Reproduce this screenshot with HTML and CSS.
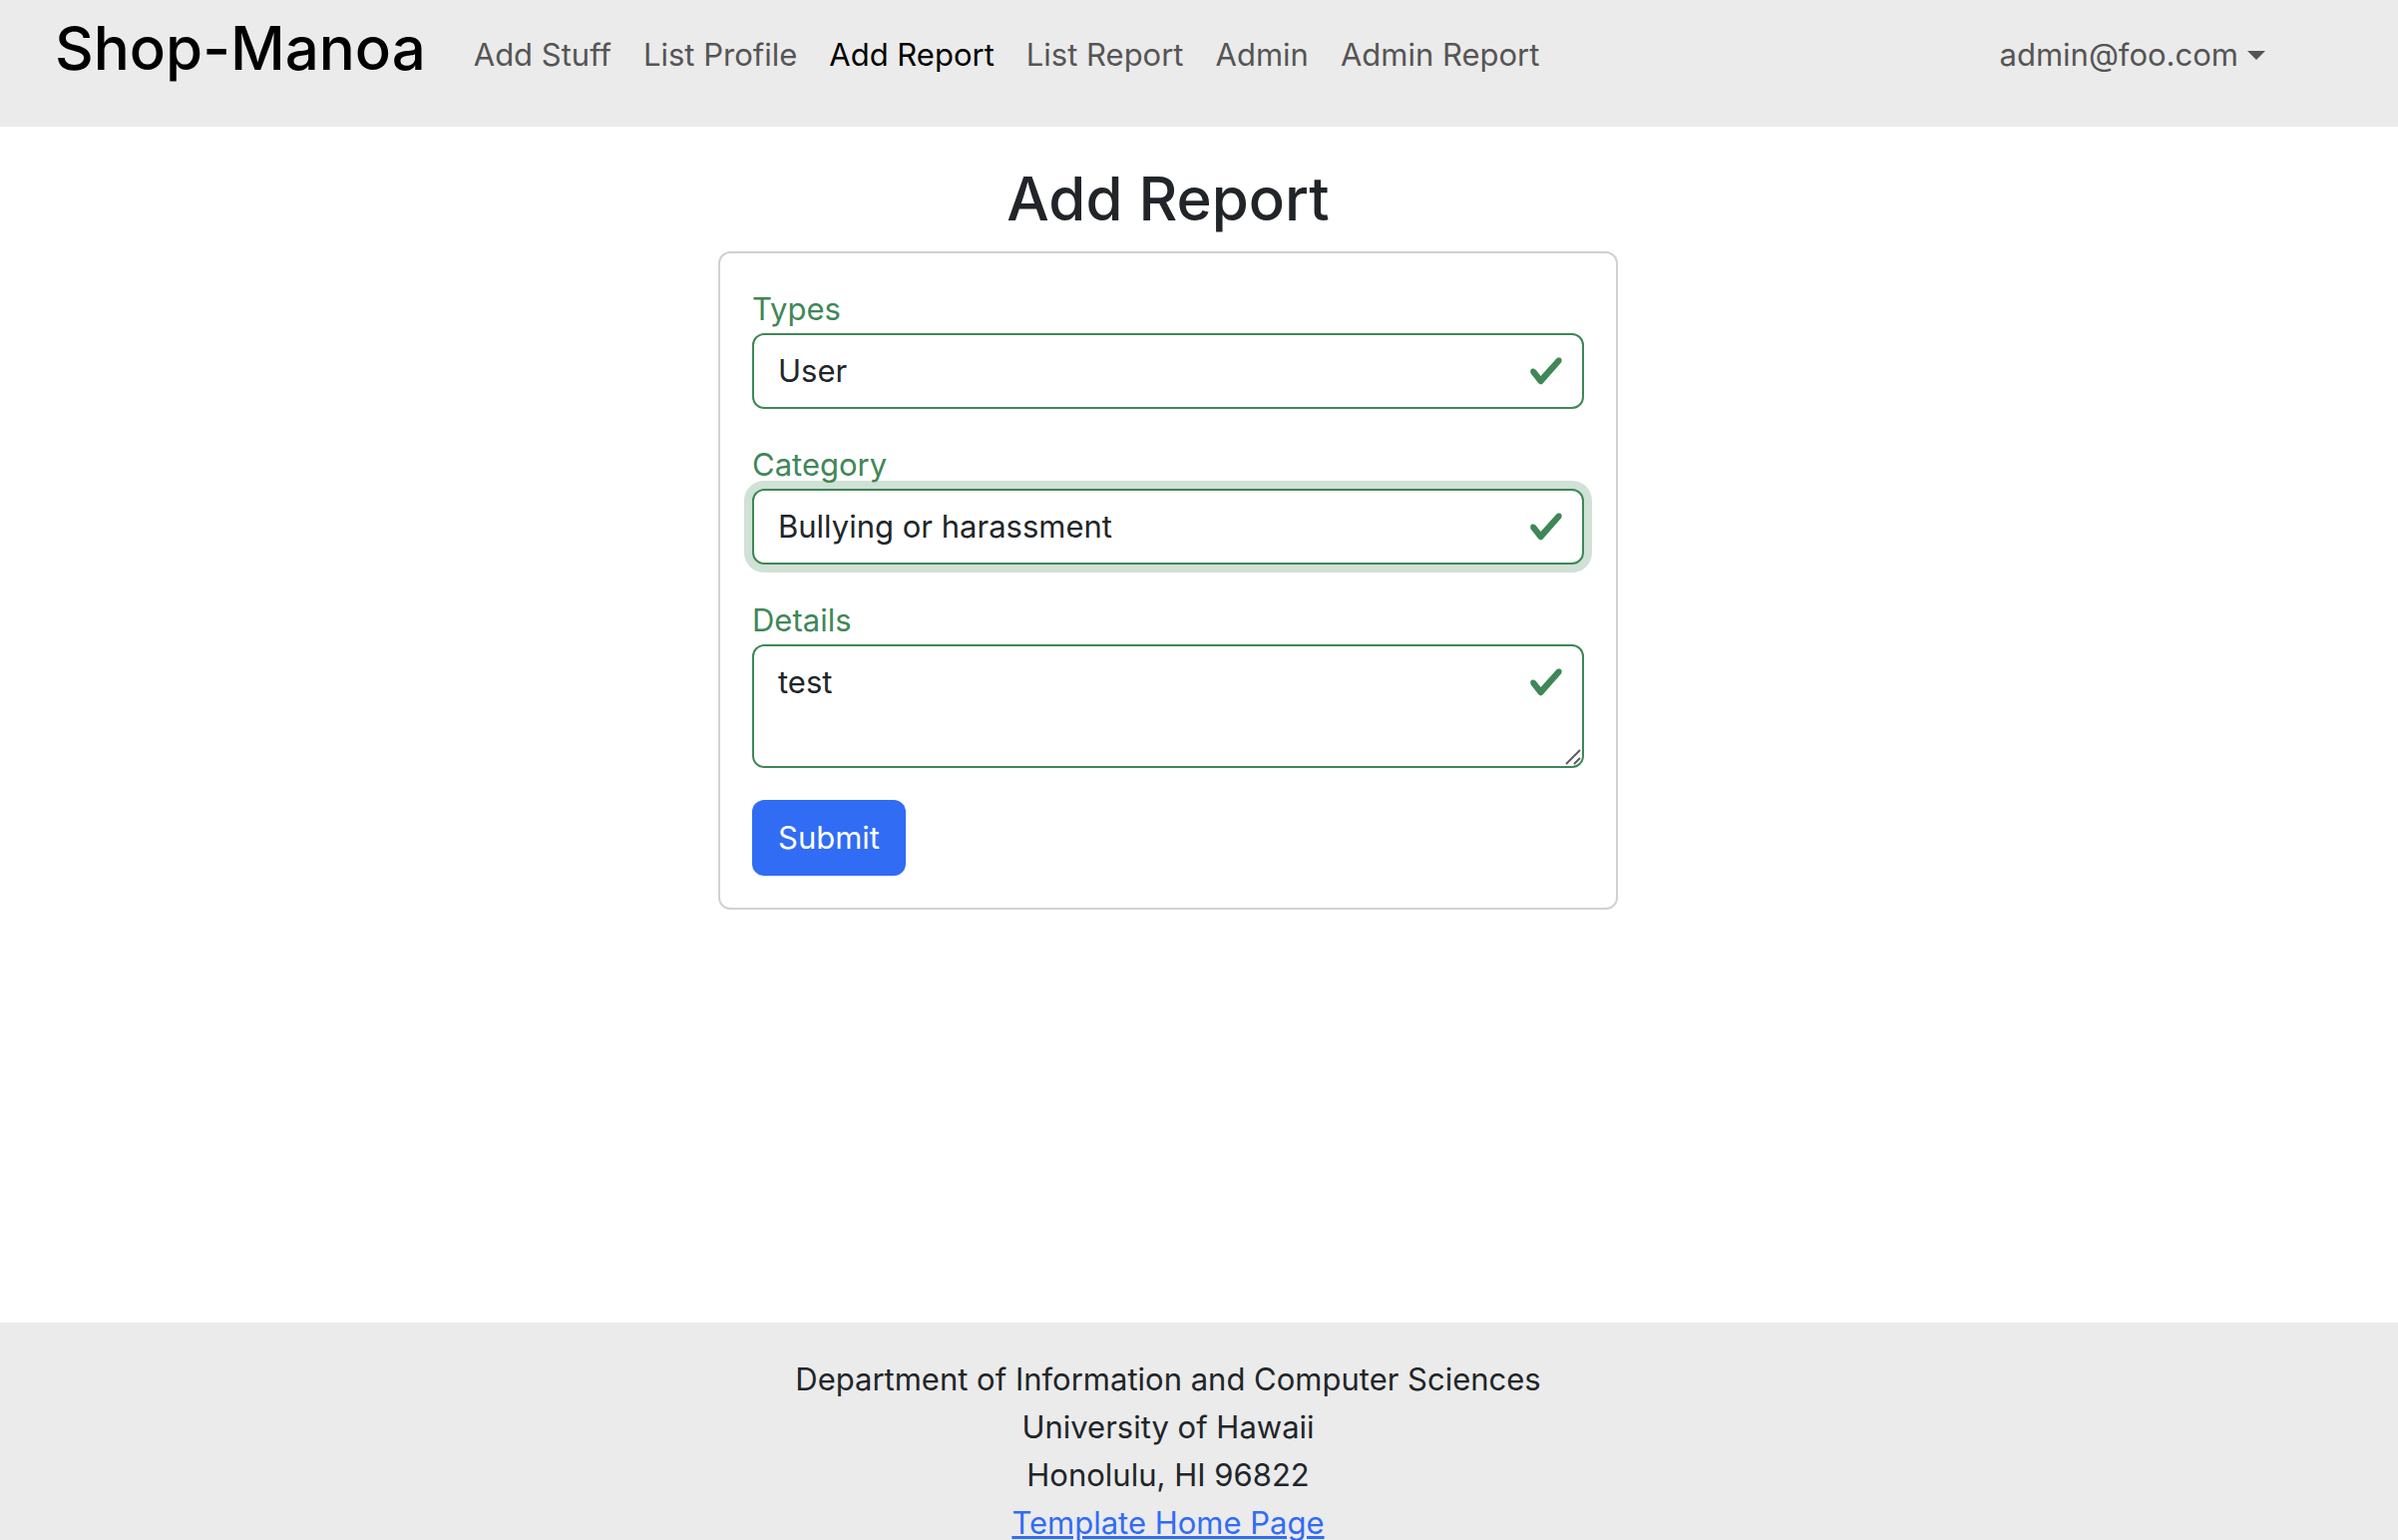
FILE: index.html
```html
<!DOCTYPE html>
<html lang="en">
<head>
<meta charset="utf-8">
<title>Shop-Manoa</title>
<link rel="stylesheet" href="styles.css">
</head>
<body>
<header class="header">
  <nav class="container navbar">
    <a class="brand" href="#">Shop-Manoa</a>
    <div class="nav-links">
      <a class="nav-link" href="#">Add Stuff</a>
      <a class="nav-link" href="#">List Profile</a>
      <a class="nav-link active" href="#">Add Report</a>
      <a class="nav-link" href="#">List Report</a>
      <a class="nav-link" href="#">Admin</a>
      <a class="nav-link" href="#">Admin Report</a>
    </div>
    <button class="nav-link user-menu" type="button">admin@foo.com<span class="caret"></span></button>
  </nav>
</header>
<main class="main">
  <div class="container report">
    <h2 class="title">Add Report</h2>
    <form class="card">
      <div class="field">
        <label class="label" for="types">Types</label>
        <select class="control" id="types"><option>User</option></select>
        <svg class="check" viewBox="0 0 8 8" aria-hidden="true"><path d="M2.3 6.73.6 4.53c-.4-1.04.46-1.4 1.1-.8l1.1 1.4 3.4-3.8c.6-.63 1.6-.27 1.2.7l-4 4.6c-.43.5-.8.4-1.1.1z"/></svg>
      </div>
      <div class="field">
        <label class="label" for="category">Category</label>
        <select class="control focused" id="category"><option>Bullying or harassment</option></select>
        <svg class="check" viewBox="0 0 8 8" aria-hidden="true"><path d="M2.3 6.73.6 4.53c-.4-1.04.46-1.4 1.1-.8l1.1 1.4 3.4-3.8c.6-.63 1.6-.27 1.2.7l-4 4.6c-.43.5-.8.4-1.1.1z"/></svg>
      </div>
      <div class="field">
        <label class="label" for="details">Details</label>
        <textarea class="control details" id="details">test</textarea>
        <svg class="check" viewBox="0 0 8 8" aria-hidden="true"><path d="M2.3 6.73.6 4.53c-.4-1.04.46-1.4 1.1-.8l1.1 1.4 3.4-3.8c.6-.63 1.6-.27 1.2.7l-4 4.6c-.43.5-.8.4-1.1.1z"/></svg>
        <svg class="grip" viewBox="0 0 16 16" aria-hidden="true"><path d="M1 15 15 1M9 15l6-6"/></svg>
      </div>
      <button class="submit" type="submit">Submit</button>
    </form>
  </div>
</main>
<footer class="footer">
  <div class="container">
    Department of Information and Computer Sciences<br>
    University of Hawaii<br>
    Honolulu, HI 96822<br>
    <a class="footer-link" href="#">Template Home Page</a>
  </div>
</footer>
</body>
</html>
```
FILE: styles.css
```css
*, *::before, *::after { box-sizing: border-box; }

body {
  margin: 0;
  background: #fff;
  color: #212529;
  font-family: Inter, "Liberation Sans", sans-serif;
  font-size: 31px;
  line-height: 48px;
}

button, select, textarea { font: inherit; color: inherit; }

.header, .main, .footer { padding-right: 62px; }

.container {
  max-width: 2280px;
  margin: 0 auto;
  padding: 0 24px;
}

.header {
  background: #ebebeb;
  padding-top: 8px;
  padding-bottom: 25px;
}

.navbar { display: flex; align-items: center; }

.brand {
  margin: 0 32px 14px 0;
  color: #000;
  font-size: 60px;
  font-weight: 500;
  line-height: 80px;
  text-decoration: none;
}

.nav-links { display: flex; flex: 1; }

.nav-link {
  padding: 16px;
  border: 0;
  background: none;
  color: #555;
  text-decoration: none;
  white-space: nowrap;
}

.nav-link.active { color: #000; }

.user-menu { display: flex; align-items: center; gap: 9px; }

.caret {
  border: 9px solid transparent;
  border-top-color: currentColor;
  border-bottom: 0;
}

.main {
  min-height: calc(100vh - 345px);
  padding-top: 32px;
}

.report {
  display: grid;
  grid-template-columns: minmax(0, 902px);
  justify-content: center;
}

.title {
  margin: 0 0 13px;
  font-size: 60px;
  font-weight: 500;
  line-height: 80px;
  text-align: center;
}

.card {
  display: flex;
  flex-direction: column;
  align-items: stretch;
  gap: 32px;
  padding: 32px;
  border: 2px solid #d1d1d1;
  border-radius: 12px;
}

.field { position: relative; }

.label {
  display: block;
  position: relative;
  z-index: 1;
  color: #3f8757;
}

.control {
  display: block;
  width: 100%;
  height: 76px;
  padding: 12px 72px 12px 24px;
  border: 2px solid #3f8757;
  border-radius: 12px;
  outline: 0;
  background: #fff;
  appearance: none;
}

.control.focused { box-shadow: 0 0 0 8px #d0e1d6; }

.details { height: 124px; resize: none; }

.check {
  position: absolute;
  top: 68px;
  right: 20px;
  width: 36px;
  height: 36px;
  fill: #3f8757;
}

.grip {
  position: absolute;
  right: 3px;
  bottom: 3px;
  width: 16px;
  height: 16px;
  fill: none;
  stroke: #5c5c60;
  stroke-width: 2;
}

.submit {
  align-self: flex-start;
  padding: 14px 26px;
  border: 0;
  border-radius: 12px;
  background: #316cf4;
  color: #fff;
}

.footer {
  padding-top: 33px;
  background: #ebebeb;
  text-align: center;
}

.footer-link { color: #316cf4; }
```
